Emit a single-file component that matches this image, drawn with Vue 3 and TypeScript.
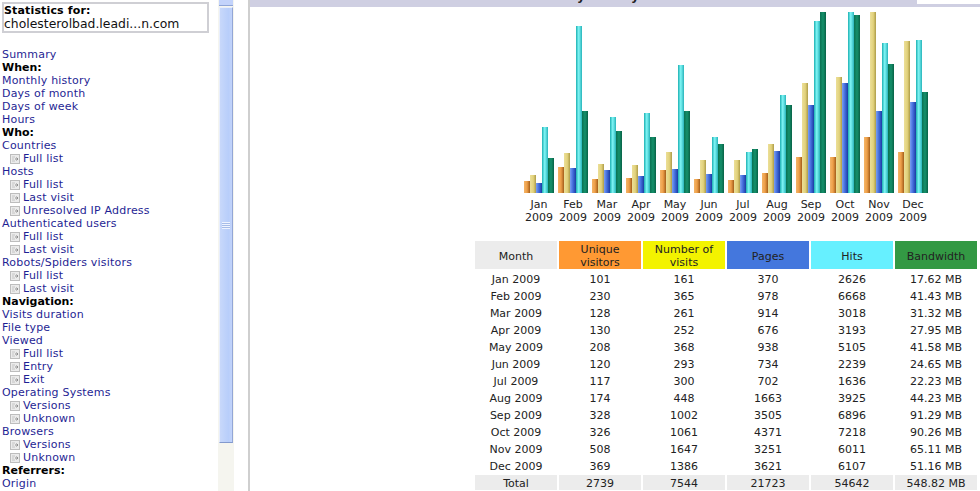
<script setup lang="ts">
interface NavLine { text: string; kind: 'link' | 'head' | 'sub' }
const nav: NavLine[] = [
  ['Summary', 'link'], ['When:', 'head'], ['Monthly history', 'link'], ['Days of month', 'link'],
  ['Days of week', 'link'], ['Hours', 'link'], ['Who:', 'head'], ['Countries', 'link'], ['Full list', 'sub'],
  ['Hosts', 'link'], ['Full list', 'sub'], ['Last visit', 'sub'], ['Unresolved IP Address', 'sub'],
  ['Authenticated users', 'link'], ['Full list', 'sub'], ['Last visit', 'sub'],
  ['Robots/Spiders visitors', 'link'], ['Full list', 'sub'], ['Last visit', 'sub'],
  ['Navigation:', 'head'], ['Visits duration', 'link'], ['File type', 'link'], ['Viewed', 'link'],
  ['Full list', 'sub'], ['Entry', 'sub'], ['Exit', 'sub'], ['Operating Systems', 'link'],
  ['Versions', 'sub'], ['Unknown', 'sub'], ['Browsers', 'link'], ['Versions', 'sub'], ['Unknown', 'sub'],
  ['Referrers:', 'head'], ['Origin', 'link'],
].map(([text, kind]) => ({ text, kind } as NavLine))

const BASE = 193
const tops: [string, number[]][] = [
  ['Jan', [181, 175, 183, 127, 158]], ['Feb', [167, 153, 168, 26, 111]], ['Mar', [179, 164, 170, 117, 131]],
  ['Apr', [178, 165, 176, 113, 137]], ['May', [170, 152, 169, 65, 111]], ['Jun', [179, 160, 174, 137, 144]],
  ['Jul', [180, 160, 175, 152, 149]], ['Aug', [173, 144, 151, 95, 105]], ['Sep', [157, 83, 105, 21, 12]],
  ['Oct', [157, 77, 83, 12, 15]], ['Nov', [137, 12, 111, 43, 64]], ['Dec', [152, 41, 102, 40, 92]],
]
const barNames = ['u', 'v', 'p', 'h', 'k']
const months = tops.map(([name, t]) => ({ name, bars: t.map((y, i) => ({ h: BASE - y, c: barNames[i] })) }))

const rows: string[][] = [
  ['Jan 2009', '101', '161', '370', '2626', '17.62 MB'],
  ['Feb 2009', '230', '365', '978', '6668', '41.43 MB'],
  ['Mar 2009', '128', '261', '914', '3018', '31.32 MB'],
  ['Apr 2009', '130', '252', '676', '3193', '27.95 MB'],
  ['May 2009', '208', '368', '938', '5105', '41.58 MB'],
  ['Jun 2009', '120', '293', '734', '2239', '24.65 MB'],
  ['Jul 2009', '117', '300', '702', '1636', '22.23 MB'],
  ['Aug 2009', '174', '448', '1663', '3925', '44.23 MB'],
  ['Sep 2009', '328', '1002', '3505', '6896', '91.29 MB'],
  ['Oct 2009', '326', '1061', '4371', '7218', '90.26 MB'],
  ['Nov 2009', '508', '1647', '3251', '6011', '65.11 MB'],
  ['Dec 2009', '369', '1386', '3621', '6107', '51.16 MB'],
]
const total = ['Total', '2739', '7544', '21723', '54642', '548.82 MB']
</script>

<template>
  <div class="page">
    <aside class="side">
      <div class="menu">
        <div class="stat"><b>Statistics for:</b><span class="host">cholesterolbad.leadi...n.com</span></div>
        <ul class="nav">
          <li v-for="(n, i) in nav" :key="i" :class="n.kind">
            <svg v-if="n.kind === 'sub'" class="ico" width="10" height="10" viewBox="0 0 10 10">
              <rect x="0.5" y="0.5" width="9" height="9" fill="#ebebeb" stroke="#bdbdbd" />
              <path d="M2 3h3M2 5h2M2 7h3" stroke="#c4c4c4" fill="none" />
              <path d="M5 5h3M6.5 3.5 8 5 6.5 6.5" stroke="#8f8f8f" fill="none" />
            </svg>
            <span>{{ n.text }}</span>
          </li>
        </ul>
      </div>
      <div class="scroll">
        <div class="btn"></div>
        <div class="thumb"><div class="grip"></div></div>
      </div>
    </aside>
    <main class="main">
      <div class="topstrip">
        <div class="title"><b>Monthly history</b></div>
        <div class="rest"></div>
      </div>
      <div class="chart">
        <div v-for="m in months" :key="m.name" class="month">
          <div class="bars">
            <div v-for="b in m.bars" :key="b.c" class="bar" :class="b.c" :style="{ height: b.h + 'px' }"></div>
          </div>
          <div class="lab">{{ m.name }}<br />2009</div>
        </div>
      </div>
      <table class="tbl">
        <thead>
          <tr>
            <th class="g">Month</th>
            <th class="hu">Unique<br />visitors</th>
            <th class="hv">Number of<br />visits</th>
            <th class="hp">Pages</th>
            <th class="hh">Hits</th>
            <th class="hk">Bandwidth</th>
          </tr>
        </thead>
        <tbody>
          <tr v-for="r in rows" :key="r[0]">
            <td v-for="(c, i) in r" :key="i">{{ c }}</td>
          </tr>
          <tr class="tot">
            <td v-for="(c, i) in total" :key="i">{{ c }}</td>
          </tr>
        </tbody>
      </table>
    </main>
  </div>
</template>

<style>
html, body { margin: 0; background: #fff; overflow: hidden; }
</style>

<style scoped>
.page {
  display: flex;
  width: 980px;
  height: 491px;
  overflow: hidden;
  font: 11px/13px "DejaVu Sans", Verdana, sans-serif;
  color: #222;
  background: #fff;
}
.side { display: flex; width: 248px; flex: none; height: 491px; overflow: hidden; }
.menu { width: 218px; flex: none; }
.stat {
  margin: 2px 0 0 2px;
  width: 203px;
  height: 27px;
  border: 2px solid #cfcfd4;
  color: #111;
  letter-spacing: 0.15px;
}
.stat b { color: #000; display: block; }
.host { display: block; font-size: 12.4px; letter-spacing: 0; }
.nav { list-style: none; margin: 15px 0 0; padding: 0; letter-spacing: 0.2px; }
.nav li { height: 13px; padding-left: 2px; white-space: nowrap; }
.link { color: #1f1f94; }
.head { color: #000; font-weight: bold; letter-spacing: 0; }
.sub { display: flex; align-items: center; padding-left: 10px !important; color: #1f1f94; }
.ico { flex: none; margin-right: 3px; }
.scroll {
  width: 16px;
  flex: none;
  background: #f5f5ef;
  display: flex;
  flex-direction: column;
  align-items: center;
  height: 491px;
}
.btn {
  width: 14px;
  height: 5px;
  flex: none;
  background: #c3d3fb;
  border-bottom: 1px solid #8fa5d8;
}
.thumb {
  margin-top: 1px;
  width: 14px;
  height: 436px;
  box-sizing: border-box;
  flex: none;
  background: linear-gradient(90deg, #c8d8fa, #b8cefa 70%, #c2d3fa);
  border: 1px solid #e8eefc;
  border-right-color: #93a6d6;
  border-bottom-color: #8299cd;
  position: relative;
}
.grip {
  position: absolute;
  left: 2px;
  right: 2px;
  top: 214px;
  height: 7px;
  background: repeating-linear-gradient(180deg, #eef3ff 0 1px, #a6bce8 1px 2px);
}
.main {
  flex: 1;
  min-width: 0;
  border-left: 2px solid #cfcfcf;
}
.topstrip { display: flex; height: 7px; overflow: hidden; align-items: flex-start; }
.title {
  width: 667px;
  height: 7px;
  background: #cfcfe2;
  text-align: center;
  font-size: 12.5px;
  line-height: 16px;
  color: #222;
  overflow: hidden;
}
.title b { display: block; margin-top: -12px; }
.rest { flex: 1; height: 3px; margin-top: 4px; background: #cfcfe2; }
.chart {
  display: flex;
  align-items: flex-start;
  margin-left: 274px;
  height: 217px;
}
.month { width: 34px; flex: none; display: flex; flex-direction: column; align-items: flex-start; }
.bars {
  width: 30px;
  height: 186px;
  display: flex;
  align-items: flex-end;
}
.bar { width: 6px; flex: none; }
.bar.u { background: linear-gradient(90deg, #f4b568, #ee9f48 50%, #a25d1a); }
.bar.v { background: linear-gradient(90deg, #ecdf98, #e2d27c 55%, #ad9c48); }
.bar.p { background: linear-gradient(90deg, #7ba0f2, #4670de 45%, #1a3ca3); }
.bar.h { background: linear-gradient(90deg, #1cb0b2, #80f6f6 45%, #28b4ba); }
.bar.k { background: linear-gradient(90deg, #0a7152, #15916b 50%, #086246); }
.lab { width: 30px; text-align: center; margin-top: 5px; white-space: nowrap; display: flex; flex-direction: column; align-items: center; display: block; }
.tbl {
  border-collapse: separate;
  border-spacing: 2px;
  margin: 15px 0 0 223px;
  table-layout: fixed;
  width: 506px;
  font: inherit;
}
.tbl th, .tbl td {
  width: 82px;
  padding: 2px 0 0;
  height: 13px;
  text-align: center;
  font-weight: normal;
  overflow: hidden;
  white-space: nowrap;
  color: #222;
}
.tbl th { height: 26px; }
.g, .tot td { background: #ececec; }
.hu { background: #ff9933; }
.hv { background: #f3f300; }
.hp { background: #4477dd; }
.hh { background: #66f0ff; }
.hk { background: #339944; }
</style>
